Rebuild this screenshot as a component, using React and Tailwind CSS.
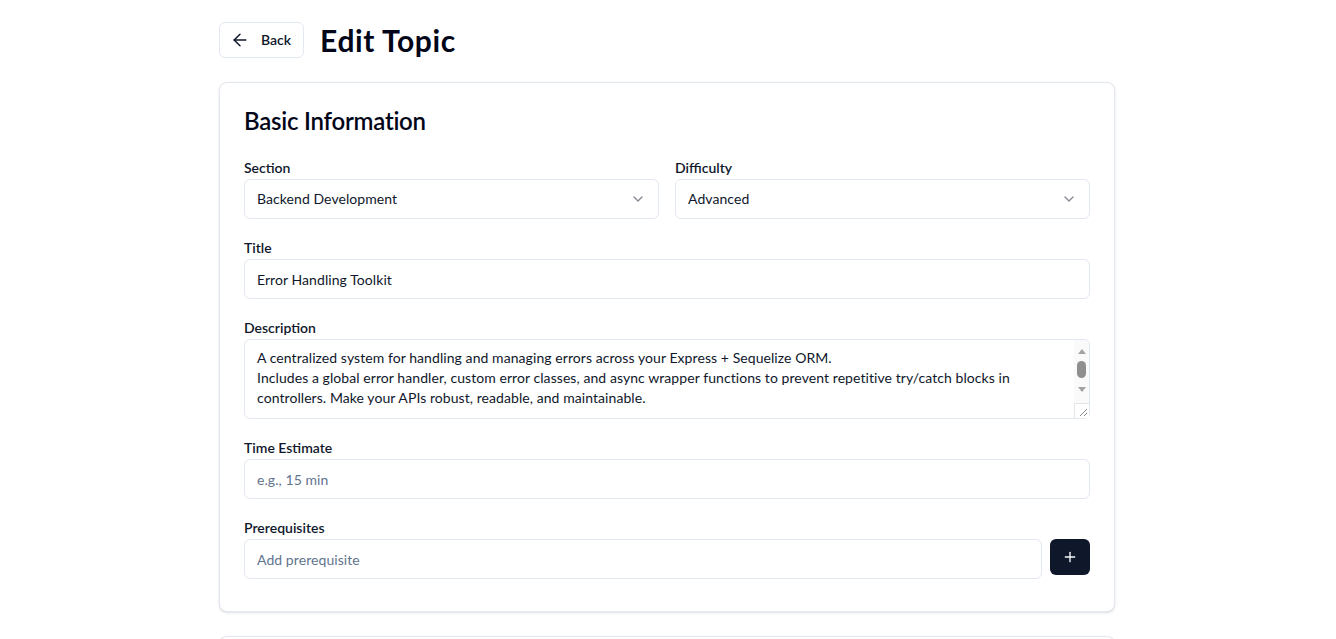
import { ArrowLeft, ChevronDown, Plus } from 'lucide-react';

function Field({ label, children }) {
  return (
    <div className="flex flex-col">
      <label className="text-sm font-semibold leading-5 text-slate-900">{label}</label>
      <div className="mt-px">{children}</div>
    </div>
  );
}

function SelectBox({ value }) {
  return (
    <button
      type="button"
      className="flex h-10 w-full items-center justify-between rounded-md border border-slate-200 bg-white px-3 text-sm tracking-[0.005em] text-slate-900"
    >
      <span>{value}</span>
      <ChevronDown className="h-4 w-4 text-slate-900 opacity-50" />
    </button>
  );
}

// stand-in for the native scrollbar the textarea shows
function FakeScrollbar() {
  return (
    <div className="pointer-events-none absolute bottom-px right-px top-px flex w-[15px] flex-col rounded-tr-md bg-[#fafafa]">
      <div className="flex flex-1 flex-col items-center pt-[9px]">
        <div className="h-0 w-0 border-x-[4px] border-b-[5px] border-x-transparent border-b-[#a3a3a3]" />
        <div className="mt-[7px] h-[17px] w-[9px] rounded-full bg-[#8f8f8f]" />
        <div className="mt-[9px] h-0 w-0 border-x-[4px] border-t-[5px] border-x-transparent border-t-[#a3a3a3]" />
      </div>
      <div className="relative h-[15px] w-[15px] border-l border-t border-[#e5e5e5] bg-white">
        <svg className="absolute bottom-[2px] right-[2px]" width="8" height="8" viewBox="0 0 8 8">
          <path d="M8 1 L1 8 M8 5 L5 8" stroke="#8a8a8a" strokeWidth="1" />
        </svg>
      </div>
    </div>
  );
}

const description =
  'A centralized system for handling and managing errors across your Express + Sequelize ORM.\nIncludes a global error handler, custom error classes, and async wrapper functions to prevent repetitive try/catch blocks in controllers. Make your APIs robust, readable, and maintainable.';

export default function App() {
  return (
    <div
      className="min-h-screen bg-white pr-[2px] text-slate-950"
      style={{ fontFamily: 'Lato, "Noto Sans", sans-serif' }}
    >
      <div className="mx-auto max-w-4xl pt-[22px]">
        <div className="mb-6 flex items-center gap-4">
          <button
            type="button"
            className="flex h-9 items-center gap-[11px] rounded-md border border-slate-200 bg-white pl-[10px] pr-[12px] text-sm font-semibold text-slate-900"
          >
            <ArrowLeft className="h-5 w-5" strokeWidth={1.75} />
            Back
          </button>
          <h1 className="text-3xl font-bold tracking-[0.02em] text-slate-950">Edit Topic</h1>
        </div>

        <div className="rounded-lg border border-slate-200 bg-white px-6 pb-8 pt-6 shadow-sm">
          <h2 className="text-2xl font-semibold leading-7 tracking-[-0.01em] text-slate-950">Basic Information</h2>

          <div className="mt-[23px] flex flex-col gap-[19px]">
            <div className="grid grid-cols-2 gap-4">
              <Field label="Section">
                <SelectBox value="Backend Development" />
              </Field>
              <Field label="Difficulty">
                <SelectBox value="Advanced" />
              </Field>
            </div>

            <Field label="Title">
              <input
                className="h-10 w-full rounded-md border border-slate-200 bg-white px-3 text-sm tracking-[0.005em] text-slate-900 outline-none"
                defaultValue="Error Handling Toolkit"
              />
            </Field>

            <Field label="Description">
              <div className="relative">
                <textarea
                  className="block h-20 w-full resize-none overflow-hidden rounded-md border border-slate-200 bg-white py-2 pl-3 pr-[28px] text-sm leading-5 tracking-[0.005em] text-slate-900 outline-none"
                  defaultValue={description}
                />
                <FakeScrollbar />
              </div>
            </Field>

            <Field label="Time Estimate">
              <input
                className="h-10 w-full rounded-md border border-slate-200 bg-white px-3 text-sm tracking-[0.005em] text-slate-900 outline-none placeholder:text-slate-500"
                placeholder="e.g., 15 min"
              />
            </Field>

            <Field label="Prerequisites">
              <div className="flex items-start gap-2">
                <input
                  className="h-10 flex-1 rounded-md border border-slate-200 bg-white px-3 text-sm tracking-[0.005em] text-slate-900 outline-none placeholder:text-slate-500"
                  placeholder="Add prerequisite"
                />
                <button
                  type="button"
                  className="flex h-9 w-10 items-center justify-center rounded-md bg-slate-900 text-slate-50"
                >
                  <Plus className="h-4 w-4" />
                </button>
              </div>
            </Field>
          </div>
        </div>

        <div className="mt-6 h-24 rounded-lg border border-slate-200 bg-white shadow-sm" />
      </div>
    </div>
  );
}
